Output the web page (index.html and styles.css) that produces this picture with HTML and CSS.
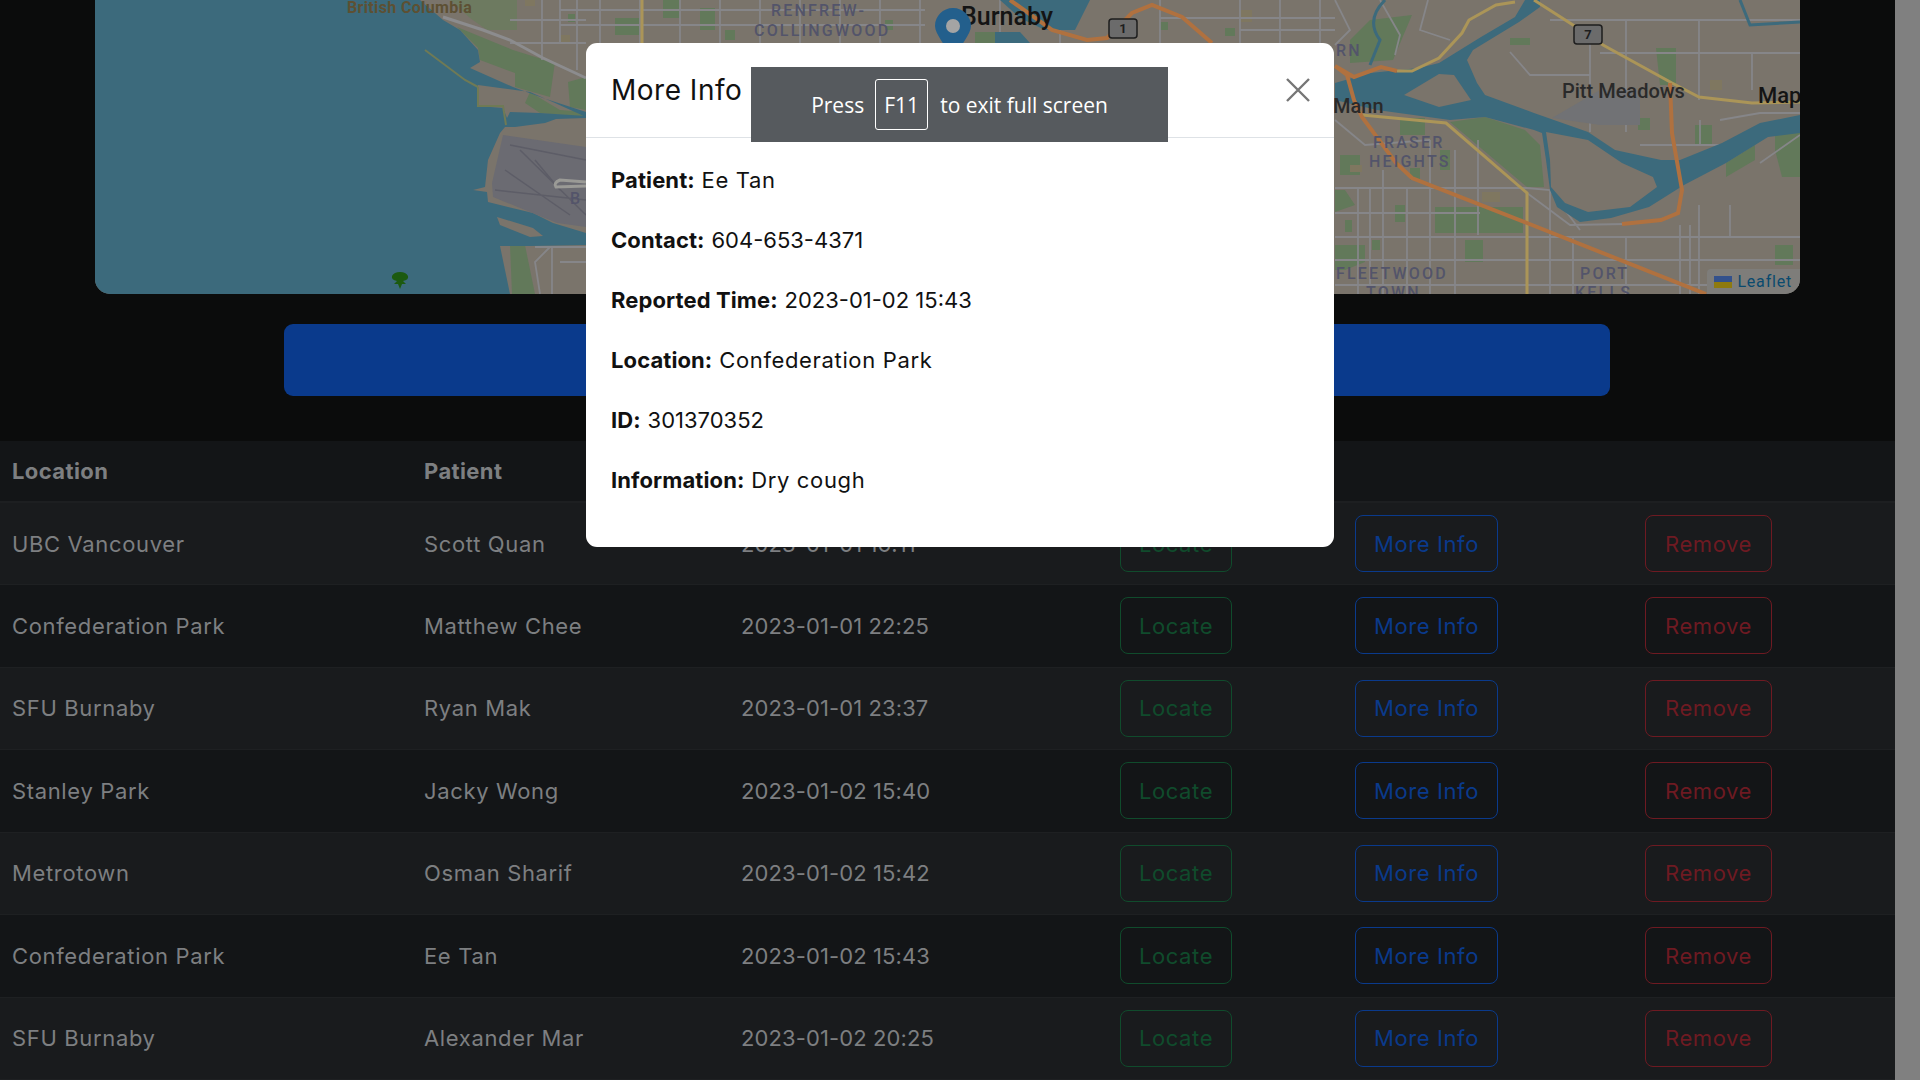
FILE: index.html
```html
<!DOCTYPE html>
<html lang="en">
<head>
<meta charset="utf-8">
<title>More Info</title>
<link rel="stylesheet" href="styles.css">
</head>
<body>
<div class="page">
  <main class="content">
    <section class="map">
      <svg class="map-svg" viewBox="95 0 1705 294" xmlns="http://www.w3.org/2000/svg" aria-label="Map">
        <rect class="land" x="95" y="0" width="1705" height="294"/>
        <!-- green areas -->
        <g class="green">
          <path d="M450 0H517V30H487L470 18Z" class="green-soft"/>
          <path d="M457 27L513 50L545 60L555 62L550 97L515 87V73L480 60L478 48Z"/>
          <path d="M568 82L586 77V110L570 107Z"/>
          <path d="M530 92L560 110L586 112V117L540 113L525 103Z"/>
          <path d="M510 245H525L535 294H512Z"/>
          <path d="M1350 40L1370 20L1412 15L1393 60L1350 63Z"/>
          <path d="M1450 122L1485 117L1525 130L1540 145L1544 187L1527 187Z"/>
          <path d="M1435 207H1523V233H1435Z"/>
          <path d="M1335 245H1365V262L1345 270H1335Z"/>
          <path d="M1335 190H1345L1355 205L1335 212Z"/>
          <path d="M1465 240H1483V262H1465Z"/>
          <path d="M1656 48H1676V85H1660Z"/>
          <path d="M1775 133H1800V177H1782L1775 150Z"/>
          <path d="M1726 163L1755 145V160L1726 177Z"/>
          <path d="M1775 245H1793V265H1775Z"/>
          <path d="M615 18H640V35H615Z"/><path d="M700 8H715V30H700Z"/><path d="M663 0H680V18H663Z"/><path d="M568 14H575V22H568Z"/><path d="M725 30H735V40H725Z"/><path d="M885 20H893V30H885Z"/>
          <path d="M975 32H1010V43H975Z"/><path d="M1030 0H1055V8H1030Z"/><path d="M1160 22H1168V30H1160Z"/><path d="M1225 28H1235V36H1225Z"/>
          <path d="M1510 38H1530V45H1510Z"/><path d="M1638 118H1650V130H1638Z"/><path d="M1695 125H1712V145H1695Z"/>
          <path d="M1340 155H1360V175H1340Z"/><path d="M1400 118H1425V135H1400Z"/><path d="M1395 205H1405V222H1395Z"/><path d="M1345 220H1352V232H1345Z"/><path d="M1372 240H1380V250H1372Z"/><path d="M1410 168H1420V180H1410Z"/><path d="M1440 150H1450V170H1440Z"/>
        </g>
        <g class="tan">
          <path d="M525 0H535V6H525Z"/><path d="M560 35H570V42H560Z"/><path d="M1350 165H1362V172H1350Z"/><path d="M1482 192H1500V202H1482Z"/>
          <path d="M1710 80H1722V90H1710Z"/><path d="M1040 20H1052V28H1040Z"/><path d="M1240 10H1252V22H1240Z"/>
        </g>
        <!-- roads -->
        <path class="road" d="M542 0V60M577 0V70M510 20H586M510 43H586M552 247V294M535 247H586M560 262H586M540 294L535 262L550 247M1358 188V294M1370 188V285M1383 170V294M1407 188V294M1430 140V294M1455 150V294M1478 140V235M1550 190V294M1573 237V294M1626 20V132M1626 237V294M1699 20V100M1752 53V90M1699 205V294M1335 188H1527M1335 213H1480M1335 237H1800M1335 260H1800M1335 285H1800M1600 53H1800M1550 20H1800M1510 52L1530 75L1590 75M1590 30V132M1335 120L1365 145L1430 140M1335 0L1350 30L1335 45M1380 0L1400 35L1395 55M1428 0L1420 30L1450 40M1527 193L1570 225L1625 224M1527 188L1550 190L1580 230M1680 225V294M1690 225V294M1720 120L1760 113H1800M1640 145H1720M1700 120V145M1730 205V237M1760 163L1800 135M560 0V43M600 0V43M640 0V43M680 0V43M720 0V43M760 0V43M800 0V43M840 0V43M880 0V43M920 0V43M1000 0V43M1060 0V43M1160 0V43M1240 0V43M1280 0V43M1320 0V43M560 10H925M560 25H925M1160 18H1335M1240 30H1335"/>
        <path class="road-wide" d="M443 17L483 30L510 40L543 58L586 78"/>
        <!-- water -->
        <path class="water" d="M95 0H420L443 20L460 30L478 50L480 62L470 68L513 87L543 98L586 112V117L555 103L530 92L500 88L478 85V106L503 108L507 118L510 112L540 113L555 114L586 116V118L556 119L545 123L515 127L505 127L500 133L488 160L485 187L473 190L487 192L488 202L533 213L553 223L586 233V245L530 246H500L505 270L510 294H95Z"/>
        <path class="land" d="M497 217L533 228L543 236L530 237L500 225Z" />
        <path class="water" d="M1525 0H1540V7L1519 22L1473 50L1467 60L1477 83L1485 95L1534 113L1588 132L1615 150L1661 160H1680L1722 143L1760 123L1800 115V133L1768 137L1726 163L1684 185L1649 207L1611 218L1580 222L1557 207L1550 190L1546 160L1542 133L1534 130L1485 117L1450 120L1377 110L1335 100V83L1370 73L1419 68L1439 63L1481 37L1515 17Z"/>
        <path class="land" d="M1439 74L1404 95L1439 107L1471 100L1454 75Z"/>
        <path class="land" d="M1546 132L1588 140L1622 163L1653 177L1657 187L1630 207L1588 212L1565 203L1551 187L1550 160Z"/>
        <path class="water" d="M1000 0H1090L1075 30H1045L1020 18Z"/><path class="water" d="M995 32H1020L1030 43H995Z"/>
        <path class="water-thin" d="M1385 0Q1365 20 1380 40L1370 65M1740 0L1750 25L1800 22"/>
        <!-- spit -->
        <path class="spit" d="M425 50L465 80L478 87M478 87V106H503L506 125"/>
        <!-- airport -->
        <path class="airport" d="M503 135L586 147V227L557 223L493 197L492 183Z"/>
        <path class="runway" d="M510 145L586 160M505 170L570 215M520 150L586 215M495 190L586 200M535 160L560 190"/>
        <path class="runway-light" d="M586 182L560 180Q553 183 556 187L586 186"/>
        <path class="airstrip" d="M1552 118L1600 90H1640V125L1600 125Z"/>
        <!-- highways -->
        <path class="hwy-yellow" d="M1397 71H1412L1439 58L1462 33L1469 20L1496 5L1515 2M1362 115L1446 123L1527 193V294M1534 0L1573 25L1603 45L1672 83L1699 97L1752 103L1800 102M642 0V43"/>
        <path class="hwy-orange" d="M1335 66L1354 77L1381 67L1397 71M1335 66L1347 75L1354 100L1362 117L1396 163L1412 178L1527 223L1706 294M1670 83L1672 133L1682 190L1678 213L1661 220L1622 224M1010 0L1052 30L1087 40L1107 38L1132 13L1152 5L1182 17L1212 43"/>
        <!-- labels -->
        <text class="lbl-region" x="347" y="13">British Columbia</text>
        <text class="lbl-area" x="771" y="16">RENFREW-</text>
        <text class="lbl-area" x="754" y="36">COLLINGWOOD</text>
        <text class="lbl-city lbl-burnaby" x="961" y="25">Burnaby</text>
        <text class="lbl-town" x="1562" y="98">Pitt Meadows</text>
        <text class="lbl-city" x="1758" y="103">Map</text>
        <text class="lbl-town" x="1333" y="113">Mann</text>
        <text class="lbl-area" x="1373" y="148">FRASER</text>
        <text class="lbl-area" x="1369" y="167">HEIGHTS</text>
        <text class="lbl-area" x="1336" y="279">FLEETWOOD</text>
        <text class="lbl-area" x="1366" y="298">TOWN</text>
        <text class="lbl-area" x="1580" y="279">PORT</text>
        <text class="lbl-area" x="1575" y="298">KELLS</text>
        <text class="lbl-area" x="1336" y="56">RN</text>
        <text class="lbl-area" x="570" y="204">B</text>
        <!-- shields -->
        <g class="shield"><rect x="1109" y="19" width="28" height="19" rx="3"/><text x="1123" y="33">1</text></g>
        <g class="shield"><rect x="1574" y="25" width="28" height="19" rx="3"/><text x="1588" y="39">7</text></g>
        <!-- tree -->
        <g class="tree"><path d="M400 289L402 284H406L403 281Q409 280 408 276Q406 272 400 272Q394 272 392 276Q391 280 397 281L394 284H398Z"/></g>
        <!-- marker -->
        <path class="marker" d="M953 8C963 8 971 16 971 26C971 34 960 46 953 60C946 46 935 34 935 26C935 16 943 8 953 8Z"/>
        <circle class="marker-hole" cx="953" cy="26" r="7"/>
      </svg>
      <div class="attribution"><span class="flag"></span><span class="leaflet">Leaflet</span></div>
    </section>

    <div class="action-bar"></div>

    <table class="cases">
      <colgroup>
        <col class="c-loc"><col class="c-pat"><col class="c-time"><col class="c-a"><col class="c-b"><col class="c-c">
      </colgroup>
      <thead>
        <tr><th>Location</th><th>Patient</th><th>Time</th><th></th><th></th><th></th></tr>
      </thead>
      <tbody>
        <tr><td>UBC Vancouver</td><td>Scott Quan</td><td class="num">2023-01-01 16:11</td><td><span class="btn locate">Locate</span></td><td><span class="btn info">More Info</span></td><td><span class="btn remove">Remove</span></td></tr>
        <tr><td>Confederation Park</td><td>Matthew Chee</td><td class="num">2023-01-01 22:25</td><td><span class="btn locate">Locate</span></td><td><span class="btn info">More Info</span></td><td><span class="btn remove">Remove</span></td></tr>
        <tr><td>SFU Burnaby</td><td>Ryan Mak</td><td class="num">2023-01-01 23:37</td><td><span class="btn locate">Locate</span></td><td><span class="btn info">More Info</span></td><td><span class="btn remove">Remove</span></td></tr>
        <tr><td>Stanley Park</td><td>Jacky Wong</td><td class="num">2023-01-02 15:40</td><td><span class="btn locate">Locate</span></td><td><span class="btn info">More Info</span></td><td><span class="btn remove">Remove</span></td></tr>
        <tr><td>Metrotown</td><td>Osman Sharif</td><td class="num">2023-01-02 15:42</td><td><span class="btn locate">Locate</span></td><td><span class="btn info">More Info</span></td><td><span class="btn remove">Remove</span></td></tr>
        <tr><td>Confederation Park</td><td>Ee Tan</td><td class="num">2023-01-02 15:43</td><td><span class="btn locate">Locate</span></td><td><span class="btn info">More Info</span></td><td><span class="btn remove">Remove</span></td></tr>
        <tr><td>SFU Burnaby</td><td>Alexander Mar</td><td class="num">2023-01-02 20:25</td><td><span class="btn locate">Locate</span></td><td><span class="btn info">More Info</span></td><td><span class="btn remove">Remove</span></td></tr>
      </tbody>
    </table>
  </main>
  <div class="scrollbar"></div>
</div>

<div class="modal">
  <header class="modal-head">
    <h2 class="modal-title">More Info</h2>
    <svg class="close" viewBox="0 0 24 24" xmlns="http://www.w3.org/2000/svg" aria-label="Close"><path d="M1 1L23 23M23 1L1 23"/></svg>
  </header>
  <div class="modal-body">
    <p><b>Patient:</b> Ee Tan</p>
    <p><b>Contact:</b> <span class="num">604-653-4371</span></p>
    <p><b>Reported Time:</b> <span class="num">2023-01-02 15:43</span></p>
    <p><b>Location:</b> Confederation Park</p>
    <p><b>ID:</b> <span class="num">301370352</span></p>
    <p><b>Information:</b> Dry cough</p>
  </div>
</div>

<div class="fs-toast"><span>Press</span><kbd class="key">F11</kbd><span>to exit full screen</span></div>
</body>
</html>
```
FILE: styles.css
```css
* { box-sizing: border-box; }
html, body { margin: 0; height: 100%; overflow: hidden; }
body { background: #0b0c0c; font-family: Inter, "Liberation Sans", sans-serif; }
.page { display: flex; height: 100vh; }
.content { flex: 1; min-width: 0; }
.scrollbar { width: 25px; background: #808080; }

.map { position: relative; height: 294px; margin: 0 95px 30px; border-radius: 0 0 15px 15px; overflow: hidden; }
.map-svg { display: block; width: 100%; height: 100%; }
.land { fill: #7a746b; }
.water { fill: #3c6a7c; }
.water-thin { fill: none; stroke: #3c6a7c; stroke-width: 3; }
.green path { fill: #62795a; }
.green .green-soft { fill: #6d7a60; }
.tan path { fill: #7f7760; }
.road { fill: none; stroke: #868689; stroke-width: 1.8; }
.road-wide { fill: none; stroke: #8c8c8e; stroke-width: 3; }
.spit { fill: none; stroke: #6f7a55; stroke-width: 2; }
.airport { fill: #6b6b72; }
.airstrip { fill: #717275; }
.runway { fill: none; stroke: #5d5d67; stroke-width: 1.5; }
.runway-light { fill: none; stroke: #9a9a96; stroke-width: 3; }
.hwy-yellow { fill: none; stroke: #ab9558; stroke-width: 3; }
.hwy-orange { fill: none; stroke: #b0713f; stroke-width: 4; }
.map-svg text { font-family: Roboto, "Liberation Sans", sans-serif; }
.lbl-region { font-size: 16px; font-weight: 700; fill: #5d5033; letter-spacing: .35px; }
.lbl-area { font-size: 16px; font-weight: 500; fill: #53546a; letter-spacing: 2.2px; }
.lbl-city { font-size: 22px; font-weight: 500; fill: #141414; }
.lbl-burnaby { font-size: 25px; }
.lbl-town { font-size: 20px; font-weight: 500; fill: #2a2a2a; }
.shield rect { fill: #6b6b6b; stroke: #1e1e1e; stroke-width: 1.5; }
.shield text { font-size: 13px; font-weight: 700; fill: #1e1e1e; text-anchor: middle; }
.tree path { fill: #1c5a10; }
.marker { fill: #235f8c; }
.marker-hole { fill: #a4a4a4; }

.attribution { position: absolute; right: 0; bottom: 0; height: 25px; padding: 0 8px 0 7px; display: flex; align-items: center; gap: 5px; background: #7e7d7a; border-top-left-radius: 4px; }
.flag { width: 18px; height: 12px; background: linear-gradient(#33518c 50%, #8e7a10 50%); }
.leaflet { font: 16px/1 Roboto, sans-serif; color: #0a4a6e; letter-spacing: .8px; }

.action-bar { height: 72px; margin: 0 285px 45px 284px; background: #0a3a8c; border-radius: 9px; }

.cases { width: 1895px; table-layout: fixed; border-collapse: collapse; color: #7d7f81; font-size: 22px; letter-spacing: .65px; }
.c-loc { width: 412px; } .c-pat { width: 317px; } .c-time { width: 379px; }
.c-a { width: 235px; } .c-b { width: 290px; } .c-c { width: 262px; }
.cases th { height: 61px; padding: 0 12px; text-align: left; font-weight: 700; letter-spacing: .4px; background: #131517; border-bottom: 2px solid #1d1f21; }
.cases td { height: 82.5px; padding: 0 12px; border-bottom: 1px solid #1e2022; }
.cases tbody tr:nth-child(odd) td { background: #191b1d; }
.cases tbody tr:nth-child(even) td { background: #131517; }
.cases td.num { letter-spacing: .1px; }
.btn { display: inline-flex; align-items: center; justify-content: center; height: 57px; border: 1px solid; border-radius: 8px; background: transparent; letter-spacing: .6px; }
.locate { width: 112px; color: #104b2c; border-color: #104b2c; }
.info { width: 143px; color: #0a3a8c; border-color: #0a3a8c; }
.remove { width: 127px; color: #6e1a22; border-color: #6e1a22; }

.modal { position: absolute; left: 586px; top: 43px; width: 748px; height: 504px; background: #fff; border-radius: 11px; color: #111; font-size: 22px; letter-spacing: .65px; }
.modal-head { display: flex; align-items: center; justify-content: space-between; height: 95px; padding: 0 24px 0 25px; border-bottom: 1px solid #dee2e6; }
.modal-title { margin: 0; font-size: 28px; font-weight: 400; letter-spacing: .5px; }
.close { width: 24px; height: 24px; }
.close path { fill: none; stroke: #767676; stroke-width: 2.4; }
.modal-body { padding: 26px 25px 0; }
.modal-body p { margin: 0 0 27px; line-height: 33px; }
.modal-body b { font-weight: 700; letter-spacing: .1px; }
.modal-body .num { letter-spacing: 0; }

.fs-toast { position: absolute; left: 751px; top: 67px; width: 417px; height: 75px; display: flex; align-items: center; justify-content: center; gap: 11px; background: #565a5e; color: #fff; font-family: "Open Sans", sans-serif; font-size: 21px; }
.key { width: 53px; height: 51px; display: flex; align-items: center; justify-content: center; margin-right: 1px; border: 1px solid #fff; border-radius: 3px; font: inherit; }
```
